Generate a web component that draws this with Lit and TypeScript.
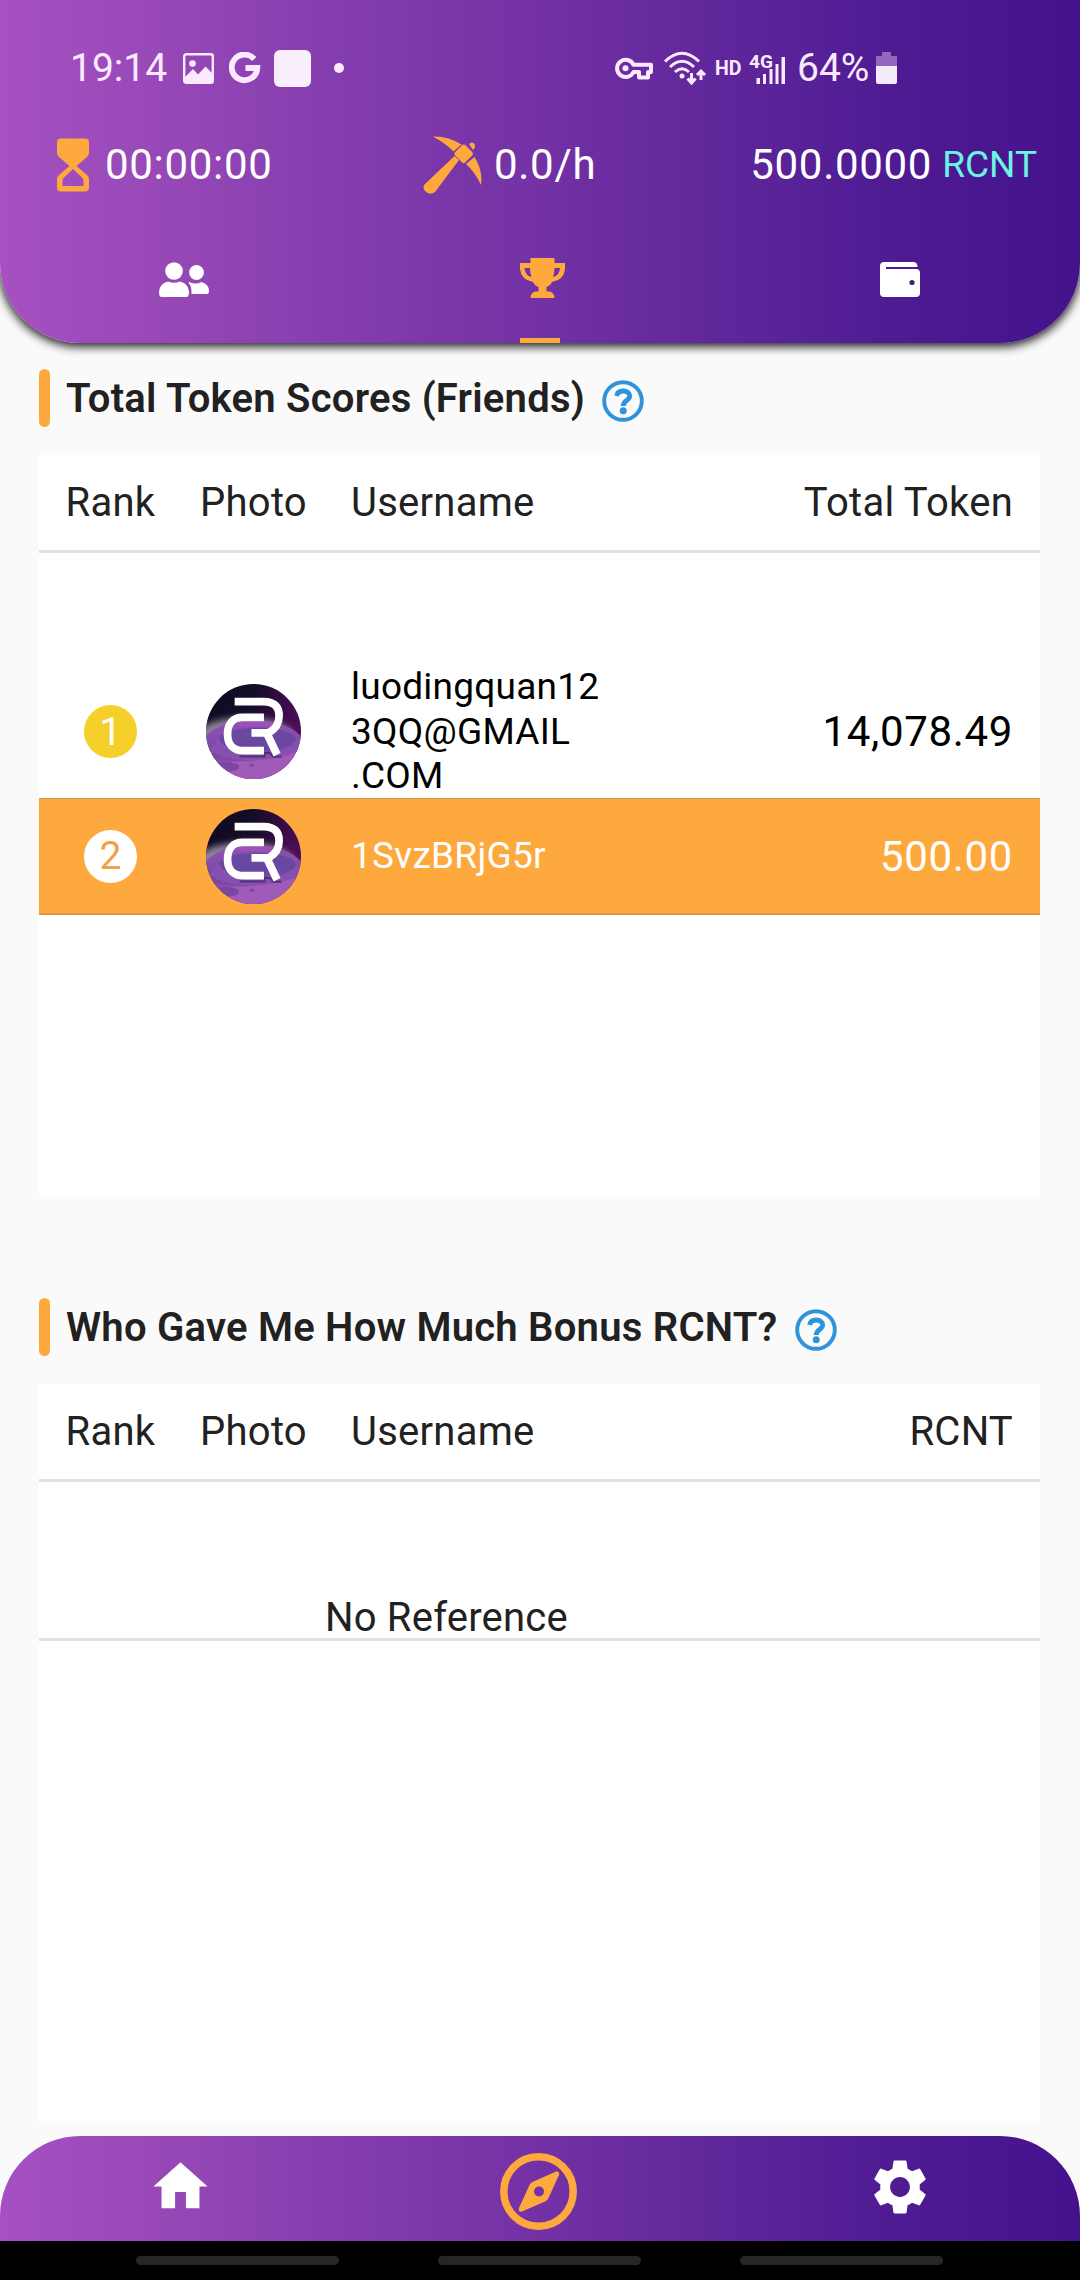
import { LitElement, html, svg, css } from "lit";
import { customElement, property } from "lit/decorators.js";

interface Friend {
  rank: number;
  name: string;
  amount: string;
  mine: boolean;
}

const friends: Friend[] = [
  { rank: 1, name: "luodingquan12\n3QQ@GMAIL\n.COM", amount: "14,078.49", mine: false },
  { rank: 2, name: "1SvzBRjG5r", amount: "500.00", mine: true },
];

@customElement("user-avatar")
class UserAvatar extends LitElement {
  static styles = css`
    :host { display: block; width: 95px; height: 95px; }
    .art { display: block; width: 95px; height: 95px; }
  `;
  render() {
    return html`<svg class="art" viewBox="50 45 282 282">
      <defs>
        <linearGradient id="sky" x1="0" y1="0" x2="1" y2="0.25">
          <stop offset="0" stop-color="#0d0a20" />
          <stop offset="0.5" stop-color="#150d28" />
          <stop offset="1" stop-color="#4d0c58" />
        </linearGradient>
        <linearGradient id="ground" x1="0" y1="0" x2="0" y2="1">
          <stop offset="0" stop-color="#8d55b4" />
          <stop offset="0.55" stop-color="#7a46a2" />
          <stop offset="1" stop-color="#a959bd" />
        </linearGradient>
        <filter id="soft" x="-30%" y="-30%" width="160%" height="160%"><feGaussianBlur stdDeviation="9" /></filter>
        <clipPath id="disc"><circle cx="191" cy="186" r="141" /></clipPath>
      </defs>
      <g clip-path="url(#disc)">
        <rect x="50" y="45" width="282" height="282" fill="url(#sky)" />
        <ellipse cx="165" cy="200" rx="145" ry="56" fill="#8b8096" filter="url(#soft)" />
        <path d="M40 215C60 178 110 154 190 152C270 154 315 176 345 215V340H40Z" fill="url(#ground)" />
        <ellipse cx="202" cy="209" rx="114" ry="34" fill="#6848a0" />
        <path d="M88 205C92 230 140 250 205 250C270 250 305 235 322 210L330 240C290 265 240 272 200 272C140 272 90 262 60 240Z" fill="#8650b0" />
        <path d="M150 157H240L252 170H140Z" fill="#a04fb8" />
        <path d="M50 272C120 280 270 276 332 240V340H50Z" fill="#a05ab8" />
        <path d="M85 276C120 276 148 280 148 290C145 304 122 307 106 300Z" fill="#7b46a2" />
        <ellipse cx="186" cy="286" rx="7" ry="5" fill="#80479f" />
        <path d="M150 260H224V250H240L250 261H274" fill="none" stroke="#351c51" stroke-width="6" opacity=".6" />
        <g fill="none" stroke="#fff" stroke-width="23">
          <path d="M135 97H222C252 97 267 112 267 139C267 166 255 179 236 190H185" />
          <path d="M222 144H158C130 144 114 164 114 194C114 225 132 243 160 243H222" />
          <path d="M231 192L261 255" />
        </g>
      </g>
    </svg>`;
  }
}

@customElement("section-title")
class SectionTitle extends LitElement {
  @property() label = "";
  static styles = css`
    :host { display: flex; align-items: center; height: 58px; }
    .bar { width: 11px; height: 58px; border-radius: 6px; background: #fea93d; }
    .text { margin: 2px 0 0 16px; font-size: 40px; line-height: 58px; font-weight: 600; letter-spacing: 0.24px; color: #212121; white-space: nowrap; }
    .help { width: 42px; height: 42px; margin: 6px 0 0 17px; }
  `;
  render() {
    return html`
      <div class="bar"></div>
      <h2 class="text">${this.label}</h2>
      <svg class="help" viewBox="0 0 42 42" fill="none" stroke="#2f93dc">
        <circle cx="21" cy="21" r="18.8" stroke-width="3.9" />
        <path d="M14.6 16C15.2 12.300 18 11 21.200 11C25 11 27.700 13 27.700 16.200C27.700 20.200 21.200 20.500 21.200 26" stroke-width="4.8" />
        <circle cx="21.2" cy="30.8" r="3.5" fill="#2f93dc" stroke="none" />
      </svg>`;
  }
}

@customElement("score-card")
class ScoreCard extends LitElement {
  @property() total = "";
  @property({ attribute: false }) rows: Friend[] = [];
  static styles = css`
    :host { display: block; background: #fff; color: #212121; }
    .line { display: grid; grid-template-columns: 91px 107px 1fr auto; column-gap: 44px; align-items: center; padding: 0 27px 0 26px; box-sizing: border-box; }
    .head { height: 98px; padding-bottom: 1px; border-bottom: 3px solid #e2e2e2; font-size: 40px; letter-spacing: 0.25px; }
    .mid { text-align: center; justify-self: center; }
    .end { text-align: right; }
    .body { padding-top: 112px; }
    .entry { height: 133px; color: #000; }
    .mine { height: 117px; background: #fea93d; color: #fff; border-top: 1px solid #cf9752; border-bottom: 2px solid #dd973f; }
    .badge { display: flex; align-items: center; justify-content: center; width: 53px; height: 53px; border-radius: 50%; background: #f5d02a; color: #fff; font-size: 39px; }
    .mine .badge { background: #fff; color: #f0a045; }
    .name { font-size: 37px; line-height: 44.5px; letter-spacing: 0.25px; white-space: pre-line; }
    .amount { font-size: 42px; letter-spacing: 0.65px; }
    .none { height: 47px; box-sizing: border-box; padding-left: 286px; border-bottom: 3px solid #e2e2e2; font-size: 40px; line-height: 48px; letter-spacing: 0.2px; }
  `;
  render() {
    return html`
      <div class="line head">
        <span class="mid">Rank</span><span class="mid">Photo</span><span>Username</span><span class="end">${this.total}</span>
      </div>
      <div class="body">
        ${this.rows.length
          ? this.rows.map((r) => html`
            <div class="line entry ${r.mine ? "mine" : ""}">
              <span class="badge mid">${r.rank}</span>
              <user-avatar class="mid"></user-avatar>
              <span class="name">${r.name}</span>
              <span class="amount end">${r.amount}</span>
            </div>`)
          : html`<div class="none">No Reference</div>`}
      </div>`;
  }
}

const gearTeeth = svg`<path d="M19.14 12.94c.04-.3.06-.61.06-.94 0-.32-.02-.64-.07-.94l2.03-1.58c.18-.14.23-.41.12-.61l-1.92-3.32c-.12-.22-.37-.29-.59-.22l-2.39.96c-.5-.38-1.03-.7-1.62-.94L14.4 2.81c-.04-.24-.24-.41-.48-.41h-3.84c-.24 0-.43.17-.47.41L9.25 5.35c-.59.24-1.13.57-1.62.94l-2.39-.96c-.22-.08-.47 0-.59.22L2.74 8.87c-.12.21-.08.47.12.61l2.03 1.58c-.05.3-.09.63-.09.94s.02.64.07.94l-2.03 1.58c-.18.14-.23.41-.12.61l1.92 3.32c.12.22.37.29.59.22l2.39-.96c.5.38 1.03.7 1.62.94l.36 2.54c.05.24.24.41.48.41h3.84c.24 0 .44-.17.47-.41l.36-2.54c.59-.24 1.13-.56 1.62-.94l2.39.96c.22.08.47 0 .59-.22l1.92-3.32c.12-.22.07-.47-.12-.61l-2.01-1.58zM12 15.6c-1.98 0-3.6-1.62-3.6-3.6s1.62-3.6 3.6-3.6 3.6 1.62 3.6 3.6-1.62 3.6-3.6 3.6z"/>`;

@customElement("app-root")
class AppRoot extends LitElement {
  static styles = css`
    :host { display: flex; flex-direction: column; width: 1080px; height: 2280px; overflow: hidden; background: #fafafa; font-family: Roboto, "Liberation Sans", sans-serif; }
    svg { display: block; flex: none; }
    .top, .bottom { background: linear-gradient(90deg, #a651c1 0%, #9446b5 18%, #803bac 35%, #7331a5 50%, #60279b 66%, #4e1b93 83%, #44128b 100%); }
    .top { box-sizing: border-box; height: 343px; flex: none; border-radius: 0 0 80px 80px; box-shadow: 0 3px 10px 1px rgba(0, 0, 0, 0.85); color: #fff; }
    .status { display: flex; align-items: center; box-sizing: border-box; height: 136px; padding: 0 183px 0 70px; color: #fbeaff; font-size: 39px; }
    .spring { flex: 1; }
    .clock { width: 113px; }
    .g { margin-left: 15px; }
    .tile { width: 37px; height: 37px; margin-left: 13px; border-radius: 6px; background: #f9effb; }
    .dot { width: 10px; height: 10px; margin-left: 23px; border-radius: 50%; background: #fbeaff; }
    .wifi { margin-left: 10px; }
    .hd { margin-left: 8px; width: 34px; font-size: 19.5px; font-weight: 700; }
    .pct { margin-left: 11px; width: 79px; white-space: nowrap; }
    .stats { display: flex; align-items: center; height: 57px; padding: 0 43px 0 57px; font-size: 42px; letter-spacing: 0.7px; }
    .stat { display: flex; align-items: center; }
    .time { width: 366px; gap: 16px; }
    .rate { gap: 12px; }
    .unit { margin-left: 10px; color: #6cf4e3; font-size: 37px; letter-spacing: 0; }
    .tabs { display: grid; grid-template-columns: repeat(3, 358px); justify-content: center; height: 150px; }
    .tab { display: flex; flex-direction: column; align-items: center; justify-content: space-between; padding-top: 64px; }
    .glyph { margin-left: 4px; }
    .mark { width: 40px; height: 5px; background: #fea93d; }
    .main { flex: 1; padding: 26px 40px 0 39px; }
    .friends { height: 742px; margin: 28px 0 101px; }
    .bonus { height: 739px; margin-top: 28px; }
    .bottom { display: grid; grid-template-columns: repeat(3, 360px); justify-content: center; align-items: center; justify-items: center; height: 105px; flex: none; border-radius: 80px 80px 0 0; }
    .system { display: flex; justify-content: center; gap: 99px; height: 39px; flex: none; box-sizing: border-box; padding: 15px 1px 0 0; background: #000; }
    .pill { width: 203px; height: 9px; border-radius: 5px; background: #262626; }
    .home { margin: 0 0 5px 0; }
    .compass { margin: 5px 3px 0 0; }
    .gear { margin: -3px 0 0 0; }
  `;
  render() {
    return html`
      <header class="top">
        <div class="status">
          <span class="clock">19:14</span>
          <svg width="31" height="31" viewBox="0 0 31 31"><rect x="1.2" y="1.2" width="28.6" height="28.6" rx="2" fill="none" stroke="#fbeaff" stroke-width="2.4" /><circle cx="9.5" cy="10.5" r="3.3" fill="#fbeaff" /><path d="M1.5 24.500L10 16L15 21.500L22.500 13.500L29.500 20.500V30H1.500Z" fill="#fbeaff" /></svg>
          <svg class="g" width="32" height="32" viewBox="0 0 32 32"><path d="M25.200 7A12.800 12.800 0 1 0 28.300 16H16.500" fill="none" stroke="#fbeaff" stroke-width="5.800" /></svg>
          <span class="tile"></span><span class="dot"></span>
          <span class="spring"></span>
          <svg width="38" height="24" viewBox="0 0 38 24" fill="none" stroke="#fbeaff"><path d="M18.500 8.800H36V16H33V21.500H24V16H18.500A8.600 8.600 0 1 1 18.500 8.800Z" stroke-width="4" stroke-linejoin="round" /><circle cx="10.500" cy="12.200" r="3" fill="#fbeaff" stroke="none" /></svg>
          <svg class="wifi" width="44" height="34" viewBox="0 0 44 34" fill="none" stroke="#fbeaff" stroke-width="3"><path d="M2 10.500Q19 -6 36 10.500" /><path d="M7 16Q19 4.500 31 16" /><path d="M12 21Q19 14.500 26 21" /><circle cx="19" cy="25" r="2.500" fill="#fbeaff" stroke="none" /><path d="M28.500 22V32M24.500 27.500L28.500 32L32.500 27.500M38 29V20M34 24L38 20L42 24" /></svg>
          <span class="hd">HD</span>
          <svg width="37" height="34" viewBox="0 0 37 34" fill="#fbeaff"><text x="0" y="17" font-size="19" font-weight="700">4G</text><path d="M7.500 27h3.500v6h-3.500zM14 23h3v10h-3zM20.500 18h3v15h-3zM26.500 13h3v20h-3zM32.500 6h3.500v27h-3.500z" /></svg>
          <span class="pct">64%</span>
          <svg width="21" height="34" viewBox="0 0 21 34"><path d="M6 1H15V5H21V16H0V5H6Z" fill="#9268bf" /><path d="M0 15H21V31Q21 33 19 33H2Q0 33 0 31Z" fill="#f5eafa" /></svg>
        </div>
        <div class="stats">
          <div class="stat time">
            <svg width="32" height="54" viewBox="0 0 32 54" fill="#fea93d"><path fill-rule="evenodd" d="M4 .5H28Q32 .5 32 4.500V15Q32 17 30 19L19.500 28L30 37Q32 39 32 41V49.500Q32 53.500 28 53.500H4Q0 53.500 0 49.500V41Q0 39 2 37L12.500 28L2 19Q0 17 0 15V4.500Q0 .5 4 .5ZM16 31L7 39.500Q5.500 41 5.500 42.500V48H26.500V42.500Q26.500 41 25 39.500Z" /></svg>
            <span>00:00:00</span>
          </div>
          <div class="stat rate">
            <svg width="59" height="58" viewBox="0 0 59 58" fill="#fea93d"><path d="M10 .5Q25 0 38.500 8.500L30.500 15.500Q22 7 10 .5ZM51.500 21Q60 34 58 49Q52 36 43 28ZM36 24L12 56Q7 60 2 55Q-1 51 2 48L31.500 20Z" /><rect x="33.500" y="10.500" width="14.500" height="14.500" rx="2.500" transform="rotate(45 40.700 17.700)" /><path d="M46 8Q49 5 51.500 8Q53 11 50 14Z" /></svg>
            <span>0.0/h</span>
          </div>
          <span class="spring"></span>
          <div class="stat"><span>500.0000</span><span class="unit">RCNT</span></div>
        </div>
        <nav class="tabs">
          <div class="tab">
            <svg class="glyph" width="50" height="45" viewBox="0 0 50 45" fill="#fff"><circle cx="15" cy="14" r="8.800" /><circle cx="37.500" cy="15.500" r="7.400" /><path d="M0 35Q0 27 9 24.500Q15 27 21 24.500Q30 27 30 35Q30 40 27.500 40H2.500Q0 40 0 35ZM30 25Q38 28 42 25Q50 27 50 34Q50 37 48 37H32.500Q33 29 29.500 26Z" /></svg>
          </div>
          <div class="tab">
            <svg class="glyph" width="45" height="42" viewBox="0 0 45 42" fill="#fea93d"><path fill-rule="evenodd" d="M10.500 1H34.500V6H45V12Q44 23 32 25Q30 29 26.500 30V34.500H30Q34.500 36 34.500 41H10.500Q10.500 36 15 34.500H18.500V30Q15 29 13 25Q1 23 0 12V6H10.500ZM4.500 11Q5 18.500 11.500 20Q10 16 10 11ZM34.500 11Q34.500 16 33 20Q39.500 18.500 40 11Z" /></svg>
            <span class="mark"></span>
          </div>
          <div class="tab">
            <svg class="glyph" width="40" height="45" viewBox="0 0 40 45"><path d="M4 5H33Q37.500 5 37.500 10H6V12H36Q40 12 40 16V36Q40 40 36 40H4Q0 40 0 36V9Q0 5 4 5Z" fill="#fff" /><circle cx="32" cy="25.500" r="2.600" fill="#44207a" /></svg>
          </div>
        </nav>
      </header>
      <main class="main">
        <section-title label="Total Token Scores (Friends)"></section-title>
        <score-card class="friends" total="Total Token" .rows=${friends}></score-card>
        <section-title label="Who Gave Me How Much Bonus RCNT?"></section-title>
        <score-card class="bonus" total="RCNT"></score-card>
      </main>
      <nav class="bottom">
        <svg class="home" width="65" height="65" viewBox="0 0 24 24" fill="#fff"><path d="M10 20v-6h4v6h5v-8h3L12 3 2 12h3v8z" /></svg>
        <svg class="compass" width="77" height="77" viewBox="0 0 77 77"><circle cx="38.500" cy="38.500" r="34.700" fill="none" stroke="#fea93d" stroke-width="7.500" /><path fill-rule="evenodd" fill="#fea93d" d="M56 18.500Q60 18 59 22L48.500 45Q47.500 47.500 45 48.500L22 58.500Q18 59.500 19 55L29.500 32Q30.500 30 32.500 29ZM39 33.500A5 5 0 1 0 39 43.500A5 5 0 1 0 39 33.500Z" /></svg>
        <svg class="gear" width="66" height="66" viewBox="0 0 24 24" fill="#fff">${gearTeeth}</svg>
      </nav>
      <footer class="system"><span class="pill"></span><span class="pill"></span><span class="pill"></span></footer>`;
  }
}
